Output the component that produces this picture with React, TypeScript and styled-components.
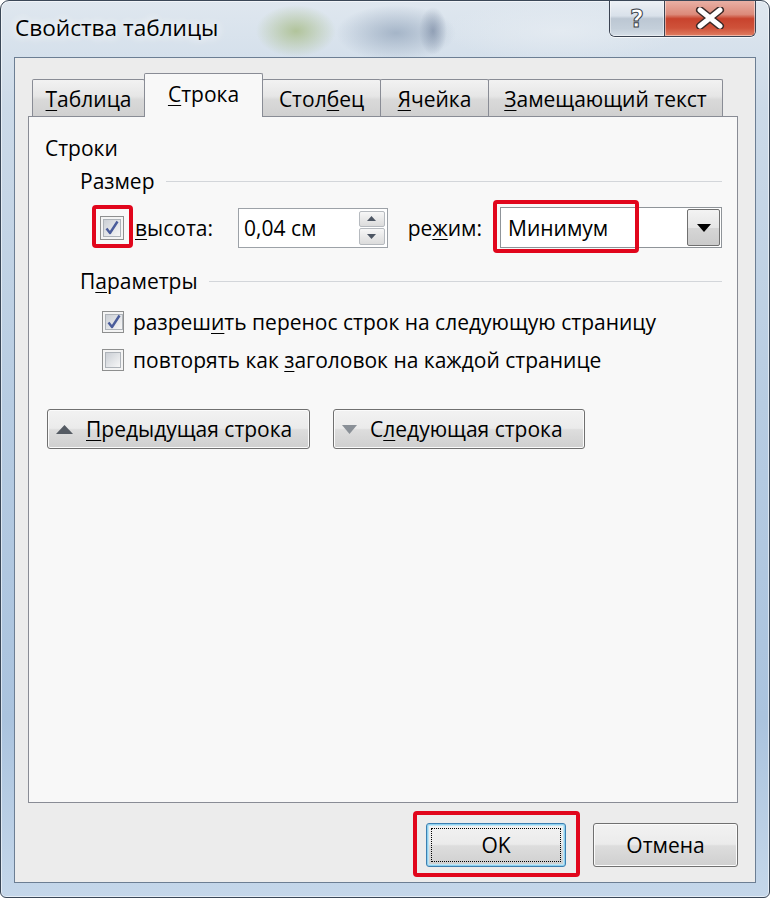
import React from "react";
import styled, { createGlobalStyle, css } from "styled-components";

const GlobalStyle = createGlobalStyle`
  html, body { margin: 0; padding: 0; }
  body {
    width: 770px;
    height: 898px;
    overflow: hidden;
    background: #ffffff;
    font-family: "Open Sans", "Noto Sans", sans-serif;
    color: #000;
  }
`;

const Window = styled.div`
  box-sizing: border-box;
  width: 770px;
  height: 898px;
  display: flex;
  flex-direction: column;
  border: 1px solid #3a4757;
  border-radius: 9px 9px 6px 6px;
  overflow: hidden;
  box-shadow: inset 0 0 0 1px rgba(255, 255, 255, 0.55);
  background:
    radial-gradient(ellipse 40px 26px at 295px 30px, rgba(170, 190, 140, 0.85), rgba(170, 190, 140, 0) 100%),
    radial-gradient(ellipse 60px 28px at 395px 32px, rgba(130, 150, 175, 0.6), rgba(130, 150, 175, 0) 100%),
    radial-gradient(ellipse 14px 24px at 432px 30px, rgba(120, 135, 160, 0.7), rgba(120, 135, 160, 0) 100%),
    radial-gradient(ellipse 120px 30px at 560px 30px, rgba(230, 236, 242, 0.8), rgba(230, 236, 242, 0) 100%),
    linear-gradient(180deg, #dfe7ef 0%, #ccdae8 12%, #b7cce2 45%, #aac3de 80%, #c5d7ea 100%);
`;

const TitleBar = styled.div`
  height: 56px;
  flex: none;
  display: flex;
  justify-content: space-between;
  align-items: flex-start;
`;

const Title = styled.div`
  padding: 12px 0 0 14px;
  font-size: 22.6px;
  line-height: 30px;
  color: #000;
  text-shadow: 0 0 8px rgba(255, 255, 255, 0.95), 0 0 14px rgba(255, 255, 255, 0.8);
`;

const CaptionButtons = styled.div`
  display: flex;
  margin: -1px 13px 0 0;
  border: 1px solid #3b4352;
  border-top: none;
  border-radius: 0 0 6px 6px;
  overflow: hidden;
  box-shadow: 0 1px 0 rgba(255, 255, 255, 0.7);
`;

const CaptionButton = styled.div<{ $close?: boolean }>`
  height: 36px;
  display: flex;
  align-items: center;
  justify-content: center;
  box-shadow: inset 0 0 0 1px rgba(255, 255, 255, 0.45);
  ${(p) =>
    p.$close
      ? css`
          width: 90px;
          background: linear-gradient(180deg, #eab3a8 0%, #dc8a7a 40%, #c8432d 52%, #cf523a 78%, #e07e62 100%);
        `
      : css`
          width: 54px;
          border-right: 1px solid #3b4352;
          background: linear-gradient(180deg, #eef2f6 0%, #d9e1ea 44%, #bcc7d3 52%, #c4cfda 80%, #d6dfe8 100%);
        `}
`;

const HelpGlyph = styled.span`
  font-family: "DejaVu Sans", sans-serif;
  font-weight: bold;
  font-size: 24px;
  line-height: 1;
  color: #fff;
  -webkit-text-stroke: 1px #3a3f48;
  margin-top: 1px;
`;

const Client = styled.div`
  flex: 1;
  display: flex;
  flex-direction: column;
  margin: 0 13px 14px 13px;
  padding: 15px 17px 15px 13px;
  border: 1px solid #6c7e93;
  background: #ececec;
`;

const TabStrip = styled.div`
  display: flex;
  align-items: flex-end;
  height: 43px;
  padding-left: 5px;
  position: relative;
  z-index: 2;
`;

const Tab = styled.div<{ $active?: boolean; $w: number }>`
  box-sizing: border-box;
  width: ${(p) => p.$w}px;
  display: flex;
  align-items: center;
  justify-content: center;
  font-size: 21px;
  border: 1px solid #898c95;
  border-bottom: none;
  border-radius: 2px 2px 0 0;
  margin-left: -1px;
  ${(p) =>
    p.$active
      ? css`
          height: 44px;
          margin-bottom: -1px;
          padding-bottom: 3px;
          background: #f8f8f8;
          position: relative;
          z-index: 2;
        `
      : css`
          height: 37px;
          padding-top: 2px;
          background: linear-gradient(180deg, #f2f2f2 0%, #e6e6e6 45%, #d9d9d9 55%, #d0d0d0 100%);
        `}
`;

const U = styled.span`
  text-decoration: underline;
  text-decoration-thickness: 1px;
  text-underline-offset: 3px;
`;

const Panel = styled.div`
  flex: 1;
  background: #f8f8f8;
  border: 1px solid #898c95;
  padding: 17px 15px 0 16px;
  position: relative;
  z-index: 1;
`;

const SectionTitle = styled.div`
  font-size: 21px;
  line-height: 28px;
`;

const GroupHeader = styled.div<{ $mt: number }>`
  display: flex;
  align-items: center;
  gap: 11px;
  margin: ${(p) => p.$mt}px 0 0 35px;
  font-size: 21px;
  line-height: 28px;
  &::after {
    content: "";
    flex: 1;
    height: 1px;
    margin-top: 1px;
    background: #d3d6da;
  }
`;

const SizeRow = styled.div`
  display: flex;
  align-items: center;
  height: 41px;
  margin: 12px 0 0 55px;
  font-size: 21px;
`;

const Anchor = styled.div<{ $ml?: number }>`
  position: relative;
  display: flex;
  align-items: center;
  margin-left: ${(p) => p.$ml ?? 0}px;
`;

const Highlight = styled.div<{ $t: number; $l: number; $w: number; $h: number }>`
  position: absolute;
  top: ${(p) => p.$t}px;
  left: ${(p) => p.$l}px;
  width: ${(p) => p.$w}px;
  height: ${(p) => p.$h}px;
  box-sizing: border-box;
  border: 4px solid #e1061c;
  border-radius: 4px;
  pointer-events: none;
  z-index: 3;
`;

const CheckBoxBox = styled.div<{ $size: number }>`
  box-sizing: border-box;
  width: ${(p) => p.$size}px;
  height: ${(p) => p.$size}px;
  flex: none;
  border: 1px solid #8e8f8f;
  background: #f4f4f4;
  padding: 2px;
  display: flex;
`;

const CheckBoxInner = styled.div`
  flex: 1;
  border: 1px solid #aeb3b9;
  background: linear-gradient(135deg, #cbcfd5 0%, #e3e5e8 55%, #f7f7f7 100%);
  display: flex;
  align-items: center;
  justify-content: center;
`;

const Label = styled.span<{ $ml: number }>`
  margin-left: ${(p) => p.$ml}px;
  white-space: nowrap;
`;

const SpinBox = styled.div`
  box-sizing: border-box;
  width: 150px;
  height: 40px;
  margin-left: 25px;
  border: 1px solid #9da2a8;
  background: #fff;
  display: flex;
  align-items: center;
  padding: 2px 2px 2px 5px;
`;

const SpinText = styled.span`
  flex: 1;
`;

const SpinButtons = styled.div`
  display: flex;
  flex-direction: column;
  align-self: stretch;
  width: 26px;
  gap: 1px;
`;

const SpinButton = styled.div`
  flex: 1;
  border: 1px solid #b6babf;
  border-radius: 2px;
  background: linear-gradient(180deg, #f7f7f7 0%, #e9e9e9 50%, #dcdcdc 100%);
  display: flex;
  align-items: center;
  justify-content: center;
`;

const Combo = styled.div`
  box-sizing: border-box;
  width: 222px;
  height: 41px;
  border: 1px solid #8f9499;
  background: #fff;
  display: flex;
  align-items: stretch;
`;

const ComboText = styled.span`
  flex: 1;
  display: flex;
  align-items: center;
  padding-left: 7px;
`;

const DropButton = styled.div`
  width: 31px;
  margin: 1px;
  border: 1px solid #707070;
  border-radius: 2px;
  background: linear-gradient(180deg, #f3f3f3 0%, #e6e6e6 50%, #d6d6d6 52%, #cbcbcb 100%);
  display: flex;
  align-items: center;
  justify-content: center;
`;

const OptionRow = styled.div<{ $mt: number }>`
  display: flex;
  align-items: center;
  height: 30px;
  margin: ${(p) => p.$mt}px 0 0 57px;
  font-size: 21px;
`;

const NavRow = styled.div`
  display: flex;
  gap: 23px;
  margin: 34px 0 0 2px;
`;

const Button = styled.button<{ $w: number; $default?: boolean }>`
  box-sizing: border-box;
  width: ${(p) => p.$w}px;
  height: 40px;
  border: 1px solid #707070;
  border-radius: 3px;
  background: linear-gradient(180deg, #f2f2f2 0%, #ebebeb 48%, #dddddd 52%, #cfcfcf 100%);
  box-shadow: inset 0 0 0 1px #fbfbfb;
  font-family: "Open Sans", "Noto Sans", sans-serif;
  font-size: 21px;
  color: #000;
  display: flex;
  align-items: center;
  padding: 0 0 0 8px;
  gap: 13px;
  position: relative;
  ${(p) =>
    p.$default &&
    css`
      border-color: #3c7fb1;
      box-shadow: inset 0 0 0 1px #8fd0ee, inset 0 0 0 2px #bfe5f5;
    `}
`;

const FocusRect = styled.div`
  position: absolute;
  inset: 4px;
  border: 1px dotted #000;
  pointer-events: none;
`;

const Footer = styled.div`
  display: flex;
  justify-content: flex-end;
  gap: 27px;
  margin-top: 20px;
`;

const FooterButton = styled(Button)`
  height: 44px;
  padding: 0;
  justify-content: center;
`;

const Check = () => (
  <svg width="16" height="16" viewBox="0 0 16 16">
    <path d="M2.5 8.5 L6 13 L13.5 1.5" fill="none" stroke="#4a5c9b" strokeWidth="2.4" strokeLinejoin="round" />
  </svg>
);

const CheckBox = ({ checked, size }: { checked?: boolean; size: number }) => (
  <CheckBoxBox $size={size}>
    <CheckBoxInner>{checked && <Check />}</CheckBoxInner>
  </CheckBoxBox>
);

const Tri = ({ dir, color, w = 9, h = 5 }: { dir: "up" | "down"; color: string; w?: number; h?: number }) => (
  <svg width={w} height={h} viewBox={`0 0 ${w} ${h}`}>
    <path d={dir === "up" ? `M0 ${h} L${w / 2} 0 L${w} ${h} Z` : `M0 0 L${w} 0 L${w / 2} ${h} Z`} fill={color} />
  </svg>
);

const CloseGlyph = () => (
  <svg width="30" height="22" viewBox="0 0 30 22">
    <path d="M5 3 L25 19 M25 3 L5 19" stroke="#3b2a28" strokeWidth="8" strokeLinecap="round" fill="none" />
    <path d="M5 3 L25 19 M25 3 L5 19" stroke="#ffffff" strokeWidth="5" strokeLinecap="round" fill="none" />
  </svg>
);

export default function App() {
  return (
    <>
      <GlobalStyle />
      <Window>
        <TitleBar>
          <Title>Свойства таблицы</Title>
          <CaptionButtons>
            <CaptionButton>
              <HelpGlyph>?</HelpGlyph>
            </CaptionButton>
            <CaptionButton $close>
              <CloseGlyph />
            </CaptionButton>
          </CaptionButtons>
        </TitleBar>

        <Client>
          <TabStrip>
            <Tab $w={113}>
              <span>
                <U>Т</U>аблица
              </span>
            </Tab>
            <Tab $w={119} $active>
              <span>
                <U>С</U>трока
              </span>
            </Tab>
            <Tab $w={119}>
              <span>
                Стол<U>б</U>ец
              </span>
            </Tab>
            <Tab $w={109}>
              <span>
                <U>Я</U>чейка
              </span>
            </Tab>
            <Tab $w={235}>
              <span>
                <U>З</U>амещающий текст
              </span>
            </Tab>
          </TabStrip>

          <Panel>
            <SectionTitle>Строки</SectionTitle>
            <GroupHeader $mt={5}>Размер</GroupHeader>

            <SizeRow>
              <Anchor>
                <CheckBox checked size={24} />
                <Highlight $t={-11} $l={-8} $w={41} $h={43} />
              </Anchor>
              <Label $ml={11}>
                <U>в</U>ысота:
              </Label>
              <SpinBox>
                <SpinText>0,04 см</SpinText>
                <SpinButtons>
                  <SpinButton>
                    <Tri dir="up" color="#4d5663" />
                  </SpinButton>
                  <SpinButton>
                    <Tri dir="down" color="#4d5663" />
                  </SpinButton>
                </SpinButtons>
              </SpinBox>
              <Label $ml={20}>
                ре<U>ж</U>им:
              </Label>
              <Anchor $ml={18}>
                <Combo>
                  <ComboText>Минимум</ComboText>
                  <DropButton>
                    <Tri dir="down" color="#000" w={14} h={8} />
                  </DropButton>
                </Combo>
                <Highlight $t={-7} $l={-7} $w={146} $h={53} />
              </Anchor>
            </SizeRow>

            <GroupHeader $mt={19}>
              <span>
                П<U>а</U>раметры
              </span>
            </GroupHeader>

            <OptionRow $mt={12}>
              <CheckBox checked size={22} />
              <Label $ml={9}>
                разреш<U>и</U>ть перенос строк на следующую страницу
              </Label>
            </OptionRow>
            <OptionRow $mt={8}>
              <CheckBox size={22} />
              <Label $ml={9}>
                повторять как <U>з</U>аголовок на каждой странице
              </Label>
            </OptionRow>

            <NavRow>
              <Button $w={263}>
                <Tri dir="up" color="#555b63" w={17} h={9} />
                <span>
                  <U>П</U>редыдущая строка
                </span>
              </Button>
              <Button $w={252}>
                <Tri dir="down" color="#8a9097" w={15} h={9} />
                <span>
                  С<U>л</U>едующая строка
                </span>
              </Button>
            </NavRow>
          </Panel>

          <Footer>
            <Anchor>
              <FooterButton $w={140} $default>
                OK
                <FocusRect />
              </FooterButton>
              <Highlight $t={-12} $l={-13} $w={167} $h={66} />
            </Anchor>
            <FooterButton $w={145}>Отмена</FooterButton>
          </Footer>
        </Client>
      </Window>
    </>
  );
}
